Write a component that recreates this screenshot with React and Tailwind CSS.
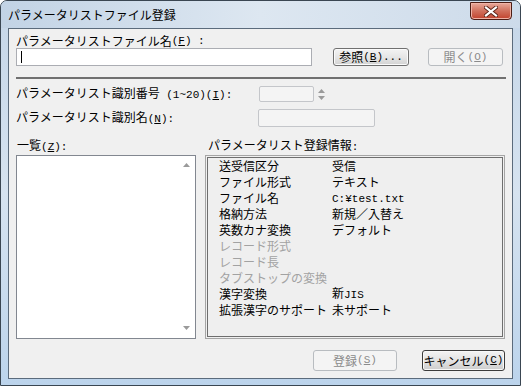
import React from 'react';

const font = { fontFamily: '"Noto Sans CJK JP", "Noto Sans", sans-serif' };

// half-width latin runs are drawn in a fixed pitch face, like the original UI font
const L = ({ children }) => (
  <span className="font-['Liberation_Mono',monospace] text-[11px]">{children}</span>
);

// underlined accelerator key inside a label
const Key = ({ k }) => <span className="underline underline-offset-1">{k}</span>;

const Button = ({ children, disabled, primary, className = '' }) => (
  <div
    className={`flex items-center justify-center rounded-[3px] border text-[12px] leading-none ${
      disabled
        ? 'border-[#b8bcc0] bg-[#f4f4f4] text-[#8b8b8b]'
        : primary
        ? 'border-[#3c3c3c] bg-gradient-to-b from-[#f3f3f3] via-[#e3e3e3] to-[#cdcdcd] text-black shadow-[inset_0_0_0_1px_#f8f8f8]'
        : 'border-[#707070] bg-gradient-to-b from-[#f3f3f3] via-[#e6e6e6] to-[#d2d2d2] text-black shadow-[inset_0_0_0_1px_#fbfbfb]'
    } ${className}`}
  >
    {children}
  </div>
);

const rows = [
  ['送受信区分', '受信'],
  ['ファイル形式', 'テキスト'],
  ['ファイル名', <L key="f">C:¥test.txt</L>],
  ['格納方法', '新規／入替え'],
  ['英数カナ変換', 'デフォルト'],
  ['レコード形式', '', true],
  ['レコード長', '', true],
  ['タブストップの変換', '', true],
  ['漢字変換', <span key="k">新<L>JIS</L></span>],
  ['拡張漢字のサポート', '未サポート'],
];

const Arrow = ({ down }) => (
  <svg width="7" height="4" viewBox="0 0 7 4">
    <path d={down ? 'M0 0 L7 0 L3.5 4 Z' : 'M0 4 L7 4 L3.5 0 Z'} fill="#9a9a9a" />
  </svg>
);

export default function App() {
  return (
    <div
      className="w-[521px] h-[386px] flex flex-col rounded-t-[7px] border border-[#3a4652] bg-gradient-to-b from-[#c5d6e8] via-[#d6e3f0] to-[#bcd4ec] overflow-hidden text-black"
      style={font}
    >
      {/* title bar */}
      <div className="h-[27px] flex items-start justify-between pl-[7px] pr-[8px] bg-gradient-to-r from-[#c2d3e5] via-[#dde7f1] to-[#cddbea]">
        <div className="pt-[7px] text-[12px] leading-[14px] text-black">パラメータリストファイル登録</div>
        <div className="mt-[1px] w-[42px] h-[18px] rounded-b-[4px] border border-[#4c1d14] bg-gradient-to-b from-[#e9a99b] via-[#d0705c] to-[#c1412c] flex items-center justify-center shadow-[inset_0_0_0_1px_#f0b3a6]">
          <svg width="14" height="11" viewBox="0 0 14 11">
            <path d="M2 1.5 L12 9.5 M12 1.5 L2 9.5" stroke="#5a2418" strokeWidth="4" strokeLinecap="square" />
            <path d="M2 1.5 L12 9.5 M12 1.5 L2 9.5" stroke="#ffffff" strokeWidth="2.2" strokeLinecap="square" />
          </svg>
        </div>
      </div>

      {/* client area */}
      <div className="mx-[7px] h-[351px] border border-[#5b6b7c] bg-[#f0f0f0] pl-[7px] pr-[7px] pt-[5px] text-[12px] leading-[14px]">
        <div className="h-[14px] flex items-center whitespace-nowrap">
          パラメータリストファイル名<L>(<Key k="F" />) :</L>
        </div>
        <div className="flex items-center h-[18px]">
          <div className="w-[296px] h-[18px] border border-[#abadb3] bg-white flex items-center pl-[4px]">
            <div className="w-[1px] h-[12px] bg-black" />
          </div>
          <Button className="ml-[21px] w-[76px] h-[18px]">
            参照<L>(<Key k="B" />)...</L>
          </Button>
          <Button disabled className="ml-[19px] w-[75px] h-[18px]">
            開く<L>(<Key k="O" />)</L>
          </Button>
        </div>

        <div className="mt-[11px] mr-[-1px] h-[2px] bg-[#707070]" />

        <div className="mt-[7px] flex items-center h-[16px]">
          <div className="w-[243px] whitespace-nowrap">
            パラメータリスト識別番号<L> (1~20)(<Key k="I" />):</L>
          </div>
          <div className="w-[55px] h-[16px] border border-[#c4c6ca] rounded-[2px] bg-[#f4f4f4]" />
          <div className="ml-[4px] flex flex-col gap-[3px]">
            <Arrow />
            <Arrow down />
          </div>
        </div>

        <div className="mt-[7px] flex items-center h-[18px]">
          <div className="w-[242px] whitespace-nowrap">
            パラメータリスト識別名<L>(<Key k="N" />):</L>
          </div>
          <div className="w-[117px] h-[18px] border border-[#c4c6ca] rounded-[2px] bg-[#f4f4f4]" />
        </div>

        <div className="mt-[12px] flex items-center h-[14px]">
          <div className="w-[192px] pl-[1px]">
            一覧<L>(<Key k="Z" />):</L>
          </div>
          <div>
            パラメータリスト登録情報<L>:</L>
          </div>
        </div>

        <div className="mt-[2px] flex h-[184px]">
          {/* list box */}
          <div className="w-[180px] h-[184px] border border-[#828790] bg-white flex justify-end">
            <div className="w-[17px] flex flex-col items-center justify-between pt-[7px] pb-[8px]">
              <Arrow />
              <Arrow down />
            </div>
          </div>

          {/* info frame */}
          <div className="ml-[9px] w-[300px] h-[184px] border border-[#a5a5a5] bg-[#f0f0f0] p-[1px]">
            <div className="h-full border border-[#6e6e6e] bg-[#efefef] pl-[11px]">
              {rows.map(([label, value, dim]) => (
                <div key={label} className={`flex h-[16px] items-center ${dim ? 'text-[#a2a2a2]' : 'text-black'}`}>
                  <div className="w-[113px] whitespace-nowrap">{label}</div>
                  <div>{value}</div>
                </div>
              ))}
            </div>
          </div>
        </div>

        <div className="mt-[11px] flex justify-end h-[21px]">
          <Button disabled className="w-[84px] h-[21px]">
            登録<L>(<Key k="S" />)</L>
          </Button>
          <Button primary className="ml-[25px] w-[83px] h-[21px]">
            キャンセル<L>(<Key k="C" />)</L>
          </Button>
        </div>
      </div>
    </div>
  );
}
